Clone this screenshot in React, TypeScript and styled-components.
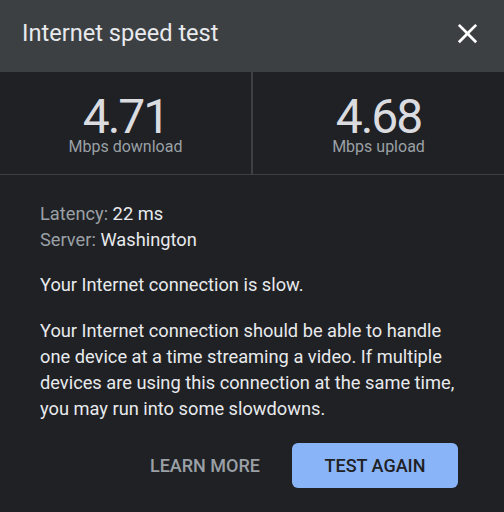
import React from "react";
import styled, { createGlobalStyle } from "styled-components";

const GlobalStyle = createGlobalStyle`
  html, body {
    margin: 0;
    padding: 0;
    background: #202124;
  }
  body {
    font-family: Roboto, "Liberation Sans", Arial, sans-serif;
  }
`;

const Dialog = styled.div`
  width: 504px;
  height: 512px;
  background: #202124;
  color: #e8eaed;
  display: flex;
  flex-direction: column;
  overflow: hidden;
`;

const Header = styled.header`
  height: 72px;
  flex-shrink: 0;
  box-sizing: border-box;
  padding: 0 20px 6px 22px;
  background: #3c4043;
  display: flex;
  align-items: center;
  justify-content: space-between;
`;

const Title = styled.h1`
  margin: 0;
  font-size: 23.6px;
  font-weight: 400;
  color: #e8eaed;
`;

const CloseButton = styled.button`
  width: 33px;
  height: 33px;
  padding: 0;
  border: 0;
  background: none;
  color: #fff;
  display: flex;
  align-items: center;
  justify-content: center;
  cursor: pointer;
`;

const Stats = styled.section`
  height: 103px;
  flex-shrink: 0;
  box-sizing: border-box;
  display: grid;
  grid-template-columns: 251px 2px 1fr;
  border-bottom: 1px solid #3c4043;
`;

const Divider = styled.div`
  background: #3c4043;
`;

const Stat = styled.div`
  display: flex;
  flex-direction: column;
  align-items: center;
  justify-content: center;
  padding-top: 5px;
`;

const Value = styled.div`
  font-size: 48px;
  line-height: 42px;
  font-weight: 400;
  color: #dadce0;
  letter-spacing: -2px;
`;

const Unit = styled.div`
  font-size: 16px;
  line-height: 18px;
  color: #9aa0a6;
`;

const Body = styled.div`
  padding: 26px 46px 0 40px;
  font-size: 18.25px;
  line-height: 26px;
`;

const Meta = styled.div`
  display: flex;
  flex-direction: column;
`;

const Label = styled.span`
  color: #9aa0a6;
`;

const Text = styled.p<{ gap: number }>`
  margin: ${({ gap }) => gap}px 0 0;
`;

const Actions = styled.div`
  margin-top: 21px;
  display: flex;
  justify-content: flex-end;
  align-items: center;
  gap: 32px;
`;

const TextButton = styled.button`
  border: 0;
  background: none;
  padding: 0;
  font-family: inherit;
  font-size: 18px;
  font-weight: 500;
  color: #9aa0a6;
  cursor: pointer;
`;

const PrimaryButton = styled.button`
  width: 166px;
  height: 45px;
  border: 0;
  border-radius: 6px;
  background: #8ab4f8;
  color: #202124;
  font-family: inherit;
  font-size: 18px;
  font-weight: 500;
  cursor: pointer;
`;

const CloseIcon = () => (
  <svg width="33" height="33" viewBox="0 0 24 24" fill="currentColor">
    <path d="M19 6.41 17.59 5 12 10.59 6.41 5 5 6.41 10.59 12 5 17.59 6.41 19 12 13.41 17.59 19 19 17.59 13.41 12z" />
  </svg>
);

export default function App() {
  return (
    <>
      <GlobalStyle />
      <Dialog>
        <Header>
          <Title>Internet speed test</Title>
          <CloseButton aria-label="Close">
            <CloseIcon />
          </CloseButton>
        </Header>
        <Stats>
          <Stat>
            <Value>4.71</Value>
            <Unit>Mbps download</Unit>
          </Stat>
          <Divider />
          <Stat>
            <Value>4.68</Value>
            <Unit>Mbps upload</Unit>
          </Stat>
        </Stats>
        <Body>
          <Meta>
            <span>
              <Label>Latency:</Label> 22 ms
            </span>
            <span>
              <Label>Server:</Label> Washington
            </span>
          </Meta>
          <Text gap={19}>Your Internet connection is slow.</Text>
          <Text gap={20}>
            Your Internet connection should be able to handle one device at a
            time streaming a video. If multiple devices are using this
            connection at the same time, you may run into some slowdowns.
          </Text>
          <Actions>
            <TextButton>LEARN MORE</TextButton>
            <PrimaryButton>TEST AGAIN</PrimaryButton>
          </Actions>
        </Body>
      </Dialog>
    </>
  );
}
